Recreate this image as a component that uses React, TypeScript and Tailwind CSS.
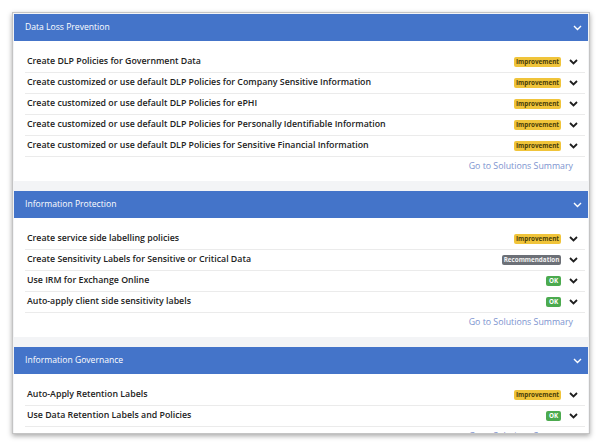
import React from "react";

type Status = "Improvement" | "Recommendation" | "OK";

const sections: { title: string; items: { label: string; status: Status }[] }[] = [
  {
    title: "Data Loss Prevention",
    items: [
      { label: "Create DLP Policies for Government Data", status: "Improvement" },
      { label: "Create customized or use default DLP Policies for Company Sensitive Information", status: "Improvement" },
      { label: "Create customized or use default DLP Policies for ePHI", status: "Improvement" },
      { label: "Create customized or use default DLP Policies for Personally Identifiable Information", status: "Improvement" },
      { label: "Create customized or use default DLP Policies for Sensitive Financial Information", status: "Improvement" },
    ],
  },
  {
    title: "Information Protection",
    items: [
      { label: "Create service side labelling policies", status: "Improvement" },
      { label: "Create Sensitivity Labels for Sensitive or Critical Data", status: "Recommendation" },
      { label: "Use IRM for Exchange Online", status: "OK" },
      { label: "Auto-apply client side sensitivity labels", status: "OK" },
    ],
  },
  {
    title: "Information Governance",
    items: [
      { label: "Auto-Apply Retention Labels", status: "Improvement" },
      { label: "Use Data Retention Labels and Policies", status: "OK" },
    ],
  },
];

function Chevron({ white }: { white?: boolean }) {
  return (
    <svg width="9" height="6" viewBox="0 0 9 6" className="shrink-0">
      <path
        d="M1 1 L4.5 4.5 L8 1"
        fill="none"
        stroke={white ? "#ffffff" : "#1f1f1f"}
        strokeWidth={white ? 1.4 : 1.8}
      />
    </svg>
  );
}

function Badge({ status }: { status: Status }) {
  if (status === "Improvement") {
    return (
      <span className="inline-flex h-[10px] w-[47px] items-center justify-center rounded-[2px] bg-[#f0c43a] text-[6.3px] font-bold leading-none text-[#4a3d08]">
        Improvement
      </span>
    );
  }
  if (status === "Recommendation") {
    return (
      <span className="inline-flex h-[10px] w-[59px] items-center justify-center rounded-[2px] bg-[#6c7077] text-[6.3px] font-bold leading-none text-[#f2f2f2]">
        Recommendation
      </span>
    );
  }
  return (
    <span className="inline-flex h-[10px] w-[15px] items-center justify-center rounded-[2px] bg-[#4caa4f] text-[6.3px] font-bold leading-none text-white">
      OK
    </span>
  );
}

function Section({ title, items, last }: { title: string; items: { label: string; status: Status }[]; last?: boolean }) {
  return (
    <div className={last ? "bg-white" : "mb-[10px] bg-white"}>
      <div className="flex h-[27px] items-center justify-between bg-[#4474c9] pl-[11px] pr-[6px]">
        <span className="text-[8.6px] text-white">{title}</span>
        <Chevron white />
      </div>
      <div className="ml-[11px] mr-[3px] pt-[11px]">
        {items.map((it) => (
          <div key={it.label} className="flex h-[21px] items-center border-b border-[#ebebeb] pl-[2px] pr-[7px]">
            <span className="flex-1 text-[8.8px] font-semibold text-[#222]">{it.label}</span>
            <Badge status={it.status} />
            <span className="ml-[8px]">
              <Chevron />
            </span>
          </div>
        ))}
        <div className="flex h-[19px] items-center justify-end pr-[12px]">
          <span className="text-[8.8px] text-[#7d93cf]">Go to Solutions Summary</span>
        </div>
      </div>
      <div className="h-[5px]" />
    </div>
  );
}

export default function App() {
  return (
    <div className="h-[445px] w-[602px] bg-white pl-[12px] pt-[12px]" style={{ fontFamily: '"Open Sans", "Noto Sans", sans-serif' }}>
      <div className="h-[422px] w-[578px] overflow-hidden border border-[#c4c4c4] bg-[#f3f4f6] p-[1px] shadow-[0_2px_5px_rgba(0,0,0,0.35)]">
        {sections.map((s, i) => (
          <Section key={s.title} title={s.title} items={s.items} last={i === sections.length - 1} />
        ))}
      </div>
    </div>
  );
}
